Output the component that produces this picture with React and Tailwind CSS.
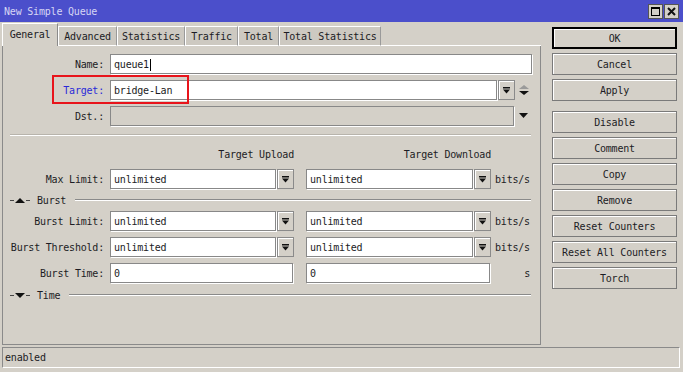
import React from "react";

const FONT = "font-['DejaVu_Sans_Mono','Liberation_Mono',monospace]";

function DropIcon() {
  return (
    <svg width="7" height="7" viewBox="0 0 7 7">
      <rect x="0" y="0" width="7" height="1.5" fill="#111" />
      <polygon points="0,2.5 7,2.5 3.5,6.5" fill="#111" />
    </svg>
  );
}

function DropButton() {
  return (
    <div className="w-[17px] h-[20px] ml-[1px] flex items-center justify-center border border-[#8a8a8a] bg-[#d4d0c8] shadow-[inset_1px_1px_0_#fff]">
      <DropIcon />
    </div>
  );
}

function Field({ w, value, disabled }) {
  return (
    <div
      className={`h-[20px] flex items-center pl-[3px] border border-[#888] shadow-[1px_1px_0_#fff] ${
        disabled ? "bg-[#d4d0c8]" : "bg-white"
      } ${w}`}
    >
      {value}
    </div>
  );
}

function Label({ children, blue }) {
  return (
    <div className={`w-[101px] text-right ${blue ? "text-[#2a2ad8]" : ""}`}>{children}</div>
  );
}

function Section({ title, open }) {
  return (
    <div className="h-[12px] flex items-center pl-[7px] pr-[9px]">
      <svg width="21" height="7" viewBox="0 0 21 7">
        <rect x="0" y="3" width="4" height="1" fill="#444" />
        {open ? (
          <polygon points="5,6 15,6 10,1" fill="#111" />
        ) : (
          <polygon points="5,1 15,1 10,6" fill="#111" />
        )}
        <rect x="16" y="3" width="4" height="1" fill="#444" />
      </svg>
      <span className="ml-[6px]">{title}</span>
      <div className="ml-[9px] flex-1 h-[2px] border-t border-[#8a8a8a] border-b border-b-white" />
    </div>
  );
}

function LimitRow({ label }) {
  return (
    <div className="flex items-center">
      <Label>{label}</Label>
      <div className="ml-[6px] flex items-center">
        <Field w="w-[166px]" value="unlimited" />
        <DropButton />
        <div className="ml-[12px]" />
        <Field w="w-[167px]" value="unlimited" />
        <DropButton />
        <span className="ml-[4px]">bits/s</span>
      </div>
    </div>
  );
}

function Btn({ children, primary }) {
  return (
    <div
      className={`h-[22px] flex items-center justify-center bg-[#d4d0c8] shadow-[inset_1px_1px_0_#fff] ${
        primary ? "border-2 border-black" : "border border-[#7a7a7a]"
      }`}
    >
      {children}
    </div>
  );
}

const tabs = [
  ["Advanced", "w-[59px]"],
  ["Statistics", "w-[68px]"],
  ["Traffic", "w-[53px]"],
  ["Total", "w-[41px]"],
  ["Total Statistics", "w-[102px]"],
];

export default function App() {
  return (
    <div className={`w-[683px] h-[372px] bg-[#d4d0c8] text-[10px] text-[#1c1c24] tracking-[-0.2px] ${FONT} overflow-hidden relative`}>
      {/* title bar */}
      <div className="h-[22px] bg-[#4b4fcb] flex items-center justify-between pl-[4px] pr-[4px]">
        <span className="text-[#d6d6f4]">New Simple Queue</span>
        <div className="flex gap-[1px]">
          <div className="w-[15px] h-[15px] bg-[#d4d0c8] border border-[#555] flex items-center justify-center">
            <div className="w-[9px] h-[9px] border border-black border-t-2" />
          </div>
          <div className="w-[15px] h-[15px] bg-[#d4d0c8] border border-[#555] flex items-center justify-center">
            <svg width="9" height="9" viewBox="0 0 9 9">
              <path d="M1 1 L8 8 M8 1 L1 8" stroke="#111" strokeWidth="2" />
            </svg>
          </div>
        </div>
      </div>

      <div className="flex pl-[2px]">
        {/* left: tabs + panel */}
        <div className="w-[539px] flex flex-col">
          <div className="h-[24px] flex items-end">
            <div className="w-[56px] h-[23px] flex items-center justify-center border-t border-l border-white border-r border-r-[#8a8a8a] pb-[2px]">
              General
            </div>
            {tabs.map(([t, w]) => (
              <div
                key={t}
                className={`${w} h-[20px] flex items-center justify-center bg-[#cdc9c1] border-t border-l border-white border-r border-r-[#9a9a9a] border-b border-b-white`}
              >
                {t}
              </div>
            ))}
            <div className="flex-1 border-b border-white" />
          </div>

          <div className="h-[299px] border-l border-r border-b border-[#8a8a8a] pt-[8px] relative">
            {/* Name */}
            <div className="flex items-center">
              <Label>Name:</Label>
              <div className="ml-[6px]">
                <Field w="w-[422px]" value={<span>queue1<span className="inline-block w-[1px] h-[12px] bg-black align-middle ml-[1px]" /></span>} />
              </div>
            </div>
            {/* Target */}
            <div className="flex items-center mt-[6px]">
              <Label blue>Target:</Label>
              <div className="ml-[6px] flex items-center">
                <Field w="w-[387px]" value="bridge-Lan" />
                <DropButton />
                <svg className="ml-[4px]" width="10" height="11" viewBox="0 0 10 11">
                  <polygon points="0,4 10,4 5,0" fill="#9a9a9a" />
                  <polygon points="0,6 10,6 5,10" fill="#111" />
                </svg>
              </div>
            </div>
            {/* Dst */}
            <div className="flex items-center mt-[6px]">
              <Label>Dst.:</Label>
              <div className="ml-[6px] flex items-center">
                <Field w="w-[404px]" value="" disabled />
                <svg className="ml-[5px]" width="9" height="6" viewBox="0 0 9 6">
                  <polygon points="0,0 9,0 4.5,5" fill="#111" />
                </svg>
              </div>
            </div>

            <div className="mt-[8px] ml-[7px] mr-[9px] h-[2px] border-t border-[#b8b4ac] border-b border-b-white" />

            <div className="mt-[11px] h-[14px] flex items-center">
              <div className="w-[107px]" />
              <div className="w-[184px] text-right">Target Upload</div>
              <div className="w-[197px] text-right">Target Download</div>
            </div>

            <div className="mt-[8px]">
              <LimitRow label="Max Limit:" />
            </div>

            <div className="mt-[5px]">
              <Section title="Burst" open />
            </div>

            <div className="mt-[5px]">
              <LimitRow label="Burst Limit:" />
            </div>
            <div className="mt-[6px]">
              <LimitRow label="Burst Threshold:" />
            </div>
            <div className="mt-[6px] flex items-center">
              <Label>Burst Time:</Label>
              <div className="ml-[6px] flex items-center">
                <Field w="w-[183px]" value="0" />
                <div className="ml-[13px]" />
                <Field w="w-[184px]" value="0" />
                <span className="w-[40px] text-right">s</span>
              </div>
            </div>

            <div className="mt-[6px]">
              <Section title="Time" />
            </div>

            {/* highlight annotation */}
            <div className="absolute left-[49px] top-[29px] w-[137px] h-[29px] border-2 border-[#e8141b]" />
          </div>
        </div>

        {/* right: buttons */}
        <div className="ml-[11px] w-[125px] pt-[5px] flex flex-col gap-[4px]">
          <Btn primary>OK</Btn>
          <Btn>Cancel</Btn>
          <Btn>Apply</Btn>
          <div className="h-[2px]" />
          <Btn>Disable</Btn>
          <Btn>Comment</Btn>
          <Btn>Copy</Btn>
          <Btn>Remove</Btn>
          <Btn>Reset Counters</Btn>
          <Btn>Reset All Counters</Btn>
          <Btn>Torch</Btn>
        </div>
      </div>

      {/* status bar */}
      <div className="mt-[2px] ml-[2px] w-[678px] h-[21px] flex items-center pl-[2px] border-t border-l border-[#8a8a8a] border-b border-r border-b-white border-r-white">
        enabled
      </div>
    </div>
  );
}
